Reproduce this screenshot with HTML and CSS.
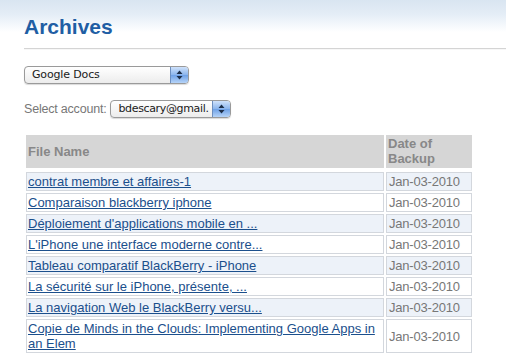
FILE: index.html
```html
<!DOCTYPE html>
<html lang="en">
<head>
  <meta charset="UTF-8">
  <title>Archives</title>
  <link rel="stylesheet" href="styles.css">
</head>
<body>
  <div class="page">
    <h1>Archives</h1>
    <hr class="rule">

    <div class="select wide">
      <span class="select-text">Google Docs</span>
      <span class="select-arrow">
        <svg width="7" height="10" viewBox="0 0 7 10"><path d="M3.5 0.5 L6.5 4 L0.5 4 Z M3.5 9.5 L6.5 6 L0.5 6 Z" fill="#1d2f4a"/></svg>
      </span>
    </div>

    <div class="account">
      <span class="account-label">Select account:</span>
      <div class="select narrow">
        <span class="select-text">bdescary@gmail.</span>
        <span class="select-arrow">
          <svg width="7" height="10" viewBox="0 0 7 10"><path d="M3.5 0.5 L6.5 4 L0.5 4 Z M3.5 9.5 L6.5 6 L0.5 6 Z" fill="#1d2f4a"/></svg>
        </span>
      </div>
    </div>

    <table class="files">
      <tr>
        <th class="name-col">File Name</th>
        <th class="date-col">Date of<br>Backup</th>
      </tr>
      <tr class="odd"><td><a href="#">contrat membre et affaires-1</a></td><td class="date">Jan-03-2010</td></tr>
      <tr><td><a href="#">Comparaison blackberry iphone</a></td><td class="date">Jan-03-2010</td></tr>
      <tr class="odd"><td><a href="#">Déploiement d'applications mobile en ...</a></td><td class="date">Jan-03-2010</td></tr>
      <tr><td><a href="#">L'iPhone une interface moderne contre...</a></td><td class="date">Jan-03-2010</td></tr>
      <tr class="odd"><td><a href="#">Tableau comparatif BlackBerry - iPhone</a></td><td class="date">Jan-03-2010</td></tr>
      <tr><td><a href="#">La sécurité sur le iPhone, présente, ...</a></td><td class="date">Jan-03-2010</td></tr>
      <tr class="odd"><td><a href="#">La navigation Web le BlackBerry versu...</a></td><td class="date">Jan-03-2010</td></tr>
      <tr><td><a href="#">Copie de Minds in the Clouds: Implementing Google Apps in an Elem</a></td><td class="date">Jan-03-2010</td></tr>
    </table>
  </div>
</body>
</html>
```

FILE: styles.css
```css
body {
  margin: 0;
  padding: 0;
  font-family: 'Liberation Sans', Arial, sans-serif;
  background: linear-gradient(to bottom, #d9e5f1 0px, #e4edf6 14px, #ffffff 32px) no-repeat;
  background-size: 100% 40px;
  background-color: #fff;
  overflow: hidden;
}

.page {
  padding: 15px 0 0 24px;
}

h1 {
  margin: 0;
  font-size: 21px;
  line-height: 24px;
  font-weight: bold;
  color: #1f5ea4;
}

.rule {
  margin: 9px 0 0 0;
  border: none;
  border-top: 1px solid #d4d4d4;
  border-bottom: 1px solid #f7f7f7;
  height: 0;
}

.select {
  display: flex;
  align-items: stretch;
  height: 18px;
  box-sizing: border-box;
  border: 1px solid #9a9a9a;
  border-radius: 4px;
  background: linear-gradient(to bottom, #ffffff, #ececec);
  box-shadow: 0 1px 1px rgba(0,0,0,0.15);
  overflow: hidden;
}

.select.wide {
  width: 165px;
  margin-top: 16px;
}

.select.narrow {
  width: 121px;
}

.select-text {
  flex: 1;
  padding-left: 7px;
  font-family: 'Lucida Grande', 'DejaVu Sans', sans-serif;
  font-size: 11px;
  line-height: 16px;
  color: #1a1a1a;
  white-space: nowrap;
  overflow: hidden;
  letter-spacing: -0.15px;
}

.narrow .select-text {
  letter-spacing: -0.35px;
}

.select-arrow {
  width: 17px;
  display: flex;
  align-items: center;
  justify-content: center;
  border-left: 1px solid #6d8fbf;
  background: linear-gradient(to bottom, #cfe2fb, #8ab4ec 50%, #6ea1e6 51%, #b6d4f8);
}

.account {
  display: flex;
  align-items: center;
  margin-top: 16px;
}

.account-label {
  font-size: 12.5px;
  color: #777;
  margin-right: 4px;
  letter-spacing: -0.2px;
}

.files {
  margin-top: 15px;
  margin-left: 0;
  border-spacing: 2px;
  width: 450px;
  font-size: 13px;
}

.files th {
  background-color: #d6d6d6;
  background-clip: padding-box;
  border-bottom: 2px solid #fff;
  color: #888;
  font-weight: bold;
  text-align: left;
  padding: 0 2px 1px 2px;
  line-height: 15px;
  height: 35px;
  box-sizing: border-box;
}

.name-col { width: 358px; }
.date-col { width: 86px; }

.files td {
  border: 1px solid #d3d7dd;
  padding: 1px 2px 1px 1px;
  line-height: 15px;
  background-color: #fff;
}

.files tr.odd td {
  background-color: #edf2f9;
}

.files a {
  color: #1b4f8c;
  text-decoration: underline;
}

.files td.date {
  color: #777;
  padding-left: 2px;
  letter-spacing: -0.2px;
}
```
